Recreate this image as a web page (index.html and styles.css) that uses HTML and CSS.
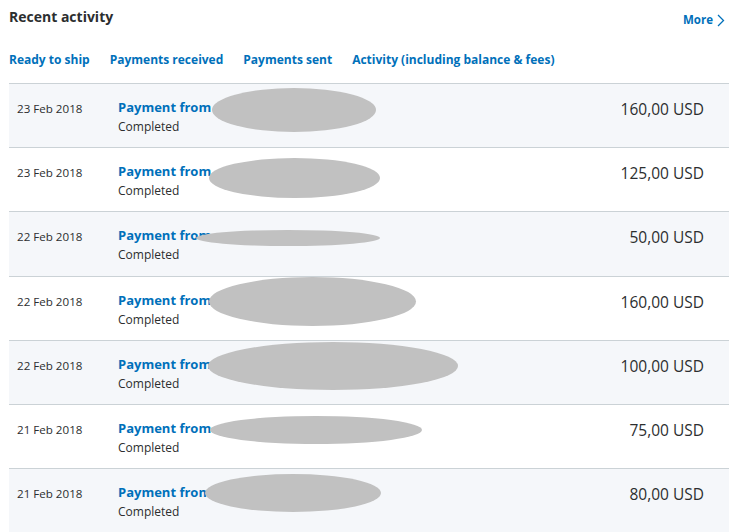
FILE: index.html
```html
<!DOCTYPE html>
<html lang="en">
<head>
  <meta charset="UTF-8" />
  <title>Recent activity</title>
  <meta name="viewport" content="width=device-width, initial-scale=1.0" />
  <link rel="stylesheet" href="styles.css">
</head>
<body>

  <div class="activity">
    <div class="activity-head">
      <h2>Recent activity</h2>
      <a class="more" href="#">More
        <svg width="8" height="13" viewBox="0 0 8 13"><path d="M1 1l5.5 5.5L1 12" fill="none" stroke="#0070ba" stroke-width="1.3"/></svg>
      </a>
    </div>

    <div class="filters">
      <a href="#">Ready to ship</a>
      <a href="#">Payments received</a>
      <a href="#">Payments sent</a>
      <a href="#">Activity (including balance &amp; fees)</a>
    </div>

    <ul class="rows">
      <li class="row">
        <span class="date">23 Feb 2018</span>
        <div class="info"><a href="#">Payment from</a><span>Completed</span></div>
        <span class="amount">160,00 USD</span>
        <span class="mask mask-1"></span>
      </li>
      <li class="row">
        <span class="date">23 Feb 2018</span>
        <div class="info"><a href="#">Payment from</a><span>Completed</span></div>
        <span class="amount">125,00 USD</span>
        <span class="mask mask-2"></span>
      </li>
      <li class="row">
        <span class="date">22 Feb 2018</span>
        <div class="info"><a href="#">Payment from</a><span>Completed</span></div>
        <span class="amount">50,00 USD</span>
        <span class="mask mask-3"></span>
      </li>
      <li class="row">
        <span class="date">22 Feb 2018</span>
        <div class="info"><a href="#">Payment from</a><span>Completed</span></div>
        <span class="amount">160,00 USD</span>
        <span class="mask mask-4"></span>
      </li>
      <li class="row">
        <span class="date">22 Feb 2018</span>
        <div class="info"><a href="#">Payment from</a><span>Completed</span></div>
        <span class="amount">100,00 USD</span>
        <span class="mask mask-5"></span>
      </li>
      <li class="row">
        <span class="date">21 Feb 2018</span>
        <div class="info"><a href="#">Payment from</a><span>Completed</span></div>
        <span class="amount">75,00 USD</span>
        <span class="mask mask-6"></span>
      </li>
      <li class="row">
        <span class="date">21 Feb 2018</span>
        <div class="info"><a href="#">Payment from</a><span>Completed</span></div>
        <span class="amount">80,00 USD</span>
        <span class="mask mask-7"></span>
      </li>
    </ul>
  </div>

</body>
</html>
```

FILE: styles.css
```css
body {
  font-family: "Open Sans", Arial, sans-serif;
  background: #fff;
  color: #2c2e2f;
  margin: 0;
  padding: 0;
  overflow: hidden;
}
a {
  color: #0070ba;
  text-decoration: none;
  font-weight: bold;
}
.activity {
  padding: 0 4px 0 9px;
}
.activity-head {
  display: flex;
  justify-content: space-between;
  align-items: flex-start;
  height: 43px;
}
.activity-head h2 {
  margin: 7px 0 0;
  font-size: 14px;
  line-height: 20px;
  color: #2c2e2f;
}
.more {
  display: flex;
  align-items: center;
  gap: 4px;
  margin: 11px 4px 0 0;
  font-size: 11.5px;
  line-height: 18px;
}
.filters {
  display: flex;
  gap: 20px;
  height: 40px;
}
.filters a {
  font-size: 12px;
  line-height: 34px;
}
.rows {
  list-style: none;
  margin: 0;
  padding: 0;
  border-top: 1px solid #cbd2d6;
}
.row {
  position: relative;
  display: flex;
  align-items: flex-start;
  height: 49.2px;
  padding: 14px 25px 0 8px;
  border-bottom: 1px solid #cbd2d6;
  background: #fff;
}
.row:nth-child(odd) {
  background: #f5f7fa;
}
.date {
  width: 101px;
  font-size: 11.6px;
  line-height: 22px;
}
.info {
  flex: 1;
  display: flex;
  flex-direction: column;
  margin-top: -1px;
}
.info a {
  font-size: 13px;
  line-height: 20px;
}
.info span {
  font-size: 12px;
  line-height: 20px;
}
.amount {
  font-size: 15.5px;
  line-height: 22px;
}
.mask {
  position: absolute;
  background: #c1c1c1;
  border-radius: 50%;
}
.mask-1 { left: 203px; top: 4px; width: 164px; height: 44px; }
.mask-2 { left: 200px; top: 10px; width: 171px; height: 40px; }
.mask-3 { left: 187px; top: 18px; width: 184px; height: 16px; }
.mask-4 { left: 200px; top: 0; width: 207px; height: 49px; }
.mask-5 { left: 199px; top: 1px; width: 250px; height: 48px; }
.mask-6 { left: 201px; top: 11px; width: 212px; height: 28px; }
.mask-7 { left: 196px; top: 5px; width: 176px; height: 38px; }
```
